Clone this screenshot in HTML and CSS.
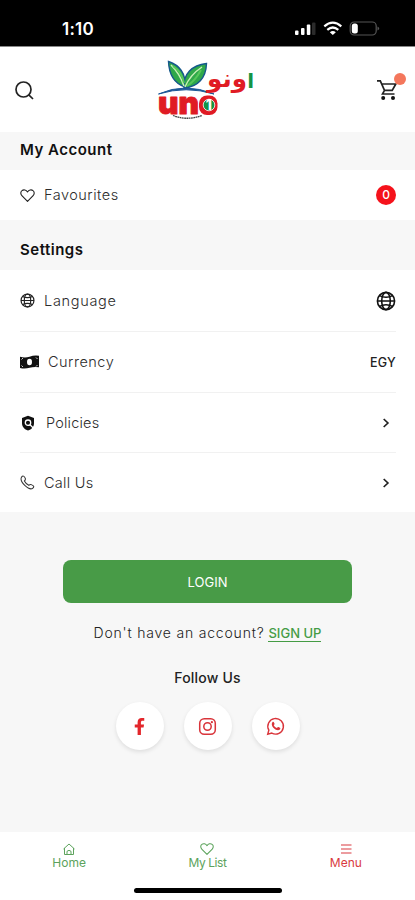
FILE: index.html
```html
<!DOCTYPE html>
<html lang="en">
<head>
<meta charset="utf-8">
<title>UNO - Menu</title>
<link rel="stylesheet" href="styles.css">
</head>
<body>
<svg class="defs" width="0" height="0" aria-hidden="true">
  <symbol id="globe" viewBox="0 0 20 20"><g fill="none" stroke="currentColor" stroke-width="1.600"><circle cx="10" cy="10" r="8.600"/><ellipse cx="10" cy="10" rx="4.300" ry="8.600"/><path d="M1.400 10h17.200M3.600 4.600c3.500 2.200 9.300 2.200 12.800 0M3.600 15.400c3.500-2.200 9.300-2.200 12.800 0"/></g></symbol>
  <symbol id="heart" viewBox="0 0 16 16"><path fill="none" stroke="currentColor" stroke-width="1.200" stroke-linejoin="round" d="M8 14.200 2 8.100C.4 6.400.5 4 2.100 2.800 3.900 1.300 6.500 1.900 8 4.200c1.500-2.300 4.100-2.900 5.900-1.400 1.600 1.200 1.700 3.600.1 5.300z"/></symbol>
  <symbol id="chevron" viewBox="0 0 10 12"><path fill="none" stroke="currentColor" stroke-width="1.700" d="m2.700 2 4.200 4-4.200 4"/></symbol>
</svg>
<div class="status">
  <span class="time">1:10</span>
  <svg class="signals" viewBox="0 0 88 20">
    <g fill="#fff"><rect x="1" y="11.500" width="3.500" height="4.500" rx="1"/><rect x="7" y="9" width="3.500" height="7" rx="1"/><rect x="12.800" y="5.500" width="3.500" height="10.500" rx="1"/></g>
    <rect x="18" y="3.500" width="3.500" height="12.500" rx="1" fill="#2b2b2b"/>
    <g fill="none" stroke="#fff" stroke-width="2.200"><path d="M30.300 7.300q8.500-7.200 17 0M33.300 10.800q5.500-4.600 11 0"/></g>
    <path d="m35.800 13.200 3 2.800 3-2.800q-3-2.200-6 0z" fill="#fff"/>
    <rect x="56.200" y="3" width="26" height="13" rx="4" fill="none" stroke="#555" stroke-width="1.200"/>
    <path d="M83.500 7.500q3.500 2 0 4z" fill="#555"/>
    <rect x="57.800" y="4.600" width="6" height="9.800" rx="2.500" fill="#fff"/>
  </svg>
</div>
<header class="header">
  <svg class="search" viewBox="0 0 20 20"><g fill="none" stroke="#222" stroke-width="1.700"><circle cx="8.500" cy="8.500" r="7.500"/><path d="m13.800 13.800 4.200 4.200"/></g></svg>
  <svg class="logo" viewBox="0 0 130 80" role="img" aria-label="UNO">
    <path d="M45 37C33 33 29 24 28.500 11.500 39 15 46 22 45 37z" fill="#2fa84a" stroke="#16588c" stroke-width="1.400"/>
    <path d="M44 38C43 24 52 15 66.500 13.500 66 28 58 37 44 38z" fill="#2fa84a" stroke="#16588c" stroke-width="1.400"/>
    <path d="M31 15q9 9 13 21M62 17Q50 25 45 37" fill="none" stroke="#c9efb6" stroke-width="1.500"/>
    <path d="M33 16q9 6 11 17M61 20Q55 31 47 36" fill="none" stroke="#55c759" stroke-width="2"/>
    <path d="M18.500 44Q45 32 74 44 46 35.500 18.500 44z" fill="#1b5797" stroke="#1b5797"/>
    <text class="logo-latin" x="18" y="63.500" textLength="41" lengthAdjust="spacingAndGlyphs">un</text>
    <rect x="59" y="45.500" width="18.500" height="19.500" rx="8" fill="#e01b24"/>
    <circle cx="69" cy="55" r="5.800" fill="#159447" stroke="#fff" stroke-width=".8"/>
    <text class="logo-one" x="65.800" y="60">1</text>
    <path d="M33 65.500q14 5.500 29 0" fill="none" stroke="#434343" stroke-width="1.300" stroke-dasharray="1.800 .5"/>
    <text class="logo-arabic" x="107" y="37" direction="rtl" textLength="40" lengthAdjust="spacingAndGlyphs">ونو</text>
    <text class="logo-arabic alef" x="114" y="38" direction="rtl">ا</text>
  </svg>
  <div class="cart">
    <svg viewBox="0 0 22 22"><g fill="none" stroke="#222" stroke-width="1.700"><path d="M1 1.800h3.300l4.200 9.500h7.700l3.600-6.300H5.800M8.500 11.300l-2 3.700h12"/></g><circle cx="7.200" cy="19" r="2" fill="#111"/><circle cx="17" cy="19" r="2" fill="#111"/></svg>
    <span class="dot"></span>
  </div>
</header>
<main>
  <h2 class="band band-account"><span class="t-account">My Account</span></h2>
  <div class="row row-fav"><svg class="ic"><use href="#heart"/></svg><span class="label t-fav">Favourites</span><span class="count">0</span></div>
  <h2 class="band band-settings"><span class="t-settings">Settings</span></h2>
  <section class="settings">
    <div class="row"><svg class="ic"><use href="#globe"/></svg><span class="label t-language">Language</span><svg class="globe"><use href="#globe"/></svg></div>
    <div class="row"><svg class="ic money" viewBox="0 0 19 14"><path fill="#111" d="M0 1.700q5 1.600 9.500 0T19 .8v11.500q-5-.8-9.500.5T0 13z"/><ellipse cx="9.500" cy="7" rx="2.500" ry="3.200" fill="#fff"/><path d="M1.500 4.500 3 3M1.500 10.500 3 12M16 2.500l1.500 1.500M16 11.500l1.500-1.500" stroke="#fff" stroke-width=".8"/></svg><span class="label t-currency">Currency</span><span class="value">EGY</span></div>
    <div class="row"><svg class="ic policy" viewBox="0 0 14 16"><path d="m7 .8 6 2.200v5c0 4-2.500 6.400-6 7.500C3.500 14.400 1 12 1 8V3z" fill="#111"/><circle cx="7" cy="7.700" r="2.700" fill="none" stroke="#fff" stroke-width="1.300"/><path d="m9 9.700 3.500 3.500" stroke="#fff" stroke-width="1.300"/></svg><span class="label t-policies">Policies</span><svg class="chev"><use href="#chevron"/></svg></div>
    <div class="row"><svg class="ic" viewBox="0 0 16 16"><path d="M1.500 2.500C3 .3 4.500 1 5.500 3.200c.8 1.600.2 2.300-.8 3.200 1 2 2.500 3.500 4.700 4.600 1-.9 1.800-1.300 3.300-.5 2.400 1.200 2.700 2.600.6 3.900C9.500 16.500-.8 7.500 1.500 2.500z" fill="none" stroke="#333" stroke-width="1.100"/></svg><span class="label t-call">Call Us</span><svg class="chev"><use href="#chevron"/></svg></div>
  </section>
  <section class="account">
    <button class="login"><span>LOGIN</span></button>
    <p class="signup"><span class="t-question">Don't have an account?</span><a>SIGN UP</a></p>
    <h3 class="follow">Follow Us</h3>
    <div class="socials">
      <span class="social"><svg viewBox="0 0 20 20"><path d="M8 19v-8H5V8h3V5.500C8 2.500 9.700 1 12.300 1H15v3h-1.700C12 4 11.500 4.600 11.500 5.700V8h3.300l-.5 3h-2.800v8z" fill="#e3262b"/></svg></span>
      <span class="social"><svg viewBox="0 0 20 20"><g fill="none" stroke="#d9343a" stroke-width="1.600"><rect x="1.800" y="1.800" width="16.400" height="16.400" rx="4.800"/><circle cx="10" cy="10" r="3.900"/></g><circle cx="14.600" cy="5.400" r="1.200" fill="#d9343a"/></svg></span>
      <span class="social"><svg viewBox="0 0 20 20"><path d="m1.800 18.200 1.200-4.400a8.200 8.200 0 1 1 3.100 3.100z" fill="none" stroke="#d9343a" stroke-width="1.500"/><path d="M6.700 5.500c.6-.7 1.300-.6 1.600.1l.7 1.600c.2.500-.4 1-.8 1.500.8 1.500 1.800 2.300 3.200 2.900.6-.5 1-1.400 1.600-1.100l1.700.8c.6.300.4 1.200-.1 1.800C11.700 16.200 3.800 9.500 6.700 5.500z" fill="#d9343a"/></svg></span>
    </div>
  </section>
</main>
<nav class="nav">
  <div class="tabs">
    <a class="tab"><svg viewBox="0 0 14 14"><path d="M2.500 6v6.500h9V6M1.500 7 7 2l5.500 5M5 12.500V9.300q2-2 4 0v3.200" fill="none" stroke="currentColor" stroke-width="1"/></svg><span class="t-home">Home</span></a>
    <a class="tab"><svg><use href="#heart"/></svg><span class="t-list">My List</span></a>
    <a class="tab active"><svg viewBox="0 0 14 14"><path d="M2 3h10.500M2 7h10.500M2 11h10.500" stroke="currentColor" stroke-width="1.200"/></svg><span class="t-menu">Menu</span></a>
  </div>
  <div class="homebar"></div>
</nav>
</body>
</html>
```
FILE: styles.css
```css
* { box-sizing: border-box; }
body { margin: 0; width: 415px; height: 900px; overflow: hidden; display: flex; flex-direction: column; background: #f7f7f7; color: #222; font-family: Inter, "Noto Sans", sans-serif; }
svg { display: block; flex: none; }
.defs { position: absolute; }
h2, h3, p { margin: 0; }
span, a { white-space: nowrap; }

.status { height: 47px; background: #000; border-bottom: 1px solid #888; display: flex; justify-content: space-between; padding: 19px 33px 0 62px; color: #fff; }
.time { font-size: 17px; line-height: 20px; font-weight: 600; letter-spacing: 0.2px; }
.signals { width: 88px; height: 20px; }

.header { height: 85px; background: #fff; display: flex; justify-content: space-between; align-items: flex-start; padding: 3px 9px 0 15px; }
.search { width: 20px; height: 20px; margin-top: 31px; }
.logo { width: 130px; height: 80px; margin-right: 1px; }
.logo-latin { font: 900 31px Inter, sans-serif; fill: #e01b24; stroke: #e01b24; stroke-width: 1; stroke-linejoin: round; }
.logo-one { font: 800 14px Inter, sans-serif; fill: #fff; }
.logo-arabic { font: bold 25px "DejaVu Sans", sans-serif; fill: #e01b24; }
.alef { font-size: 20px; fill: #149447; }
.cart { position: relative; width: 30px; height: 30px; margin-top: 28px; }
.cart svg { width: 22px; height: 22px; margin-top: 1px; }
.dot { position: absolute; left: 18px; top: -5px; width: 12px; height: 12px; border-radius: 50%; background: #f4775c; }

.band { padding-left: 20px; display: flex; align-items: center; font-size: 15px; font-weight: 600; color: #111; letter-spacing: 0.5px; }
.band-account { height: 38px; padding-bottom: 3px; }
.band-settings { height: 50px; padding-top: 9px; }
.row { display: flex; align-items: center; height: 61px; }
.row-fav { height: 50px; background: #fff; padding: 0 19px 0 20px; }
.ic { width: 15px; height: 15px; margin-right: 9px; }
.money { width: 19px; height: 14px; }
.policy { width: 16px; height: 16px; margin-right: 10px; }
.label { flex: 1; font-size: 14.500px; font-weight: 350; color: #2c2c2c; letter-spacing: 0.5px; position: relative; top: -0.5px; }
.t-language { letter-spacing: 0.7px; }
.t-policies { letter-spacing: 0.2px; }
.t-call { letter-spacing: 0.3px; }
.count { width: 20px; height: 20px; border-radius: 50%; background: #f5121b; color: #fff; font-size: 12px; font-weight: 500; line-height: 20px; text-align: center; }
.settings { background: #fff; padding: 0 19px 0 20px; height: 242px; }
.settings .row + .row { border-top: 1px solid #f1f1f1; }
.settings .row:nth-child(n+3) { height: 60px; }
.globe { width: 20px; height: 20px; color: #111; }
.value { font-size: 12.500px; font-weight: 500; letter-spacing: 0.2px; }
.chev { width: 10px; height: 12px; margin-right: 5px; }

.account { height: 320px; padding-top: 48px; display: flex; flex-direction: column; align-items: center; }
.login { width: 289px; height: 43px; border: 0; border-radius: 8px; background: #489b47; color: #fff; font: 400 13px Inter, sans-serif; }
.signup { display: flex; gap: 4px; height: 18px; margin-top: 21px; font-size: 14px; line-height: 18px; font-weight: 350; }
.t-question { letter-spacing: 0.8px; }
.signup a { color: #459c45; font-size: 13px; font-weight: 450; border-bottom: 1px solid #459c45; }
.follow { margin-top: 26px; font-size: 14px; line-height: 20px; font-weight: 500; letter-spacing: 0.2px; }
.socials { display: flex; gap: 20px; margin-top: 14px; }
.social { width: 48px; height: 48px; border-radius: 50%; background: #fff; box-shadow: 0 2px 4px rgba(0, 0, 0, .1); display: grid; place-items: center; }
.social svg { width: 19px; height: 19px; }

.nav { height: 68px; background: #fff; display: flex; flex-direction: column; align-items: center; }
.tabs { width: 415px; display: grid; grid-template-columns: repeat(3, 1fr); height: 56px; padding-top: 10px; }
.tab { display: flex; flex-direction: column; align-items: center; color: #5ca35c; font-size: 12px; line-height: 14px; }
.tab svg { width: 14px; height: 14px; }
.t-list { letter-spacing: -0.4px; }
.tab.active { color: #d93a40; }
.homebar { width: 148px; height: 5px; border-radius: 3px; background: #000; }
```
